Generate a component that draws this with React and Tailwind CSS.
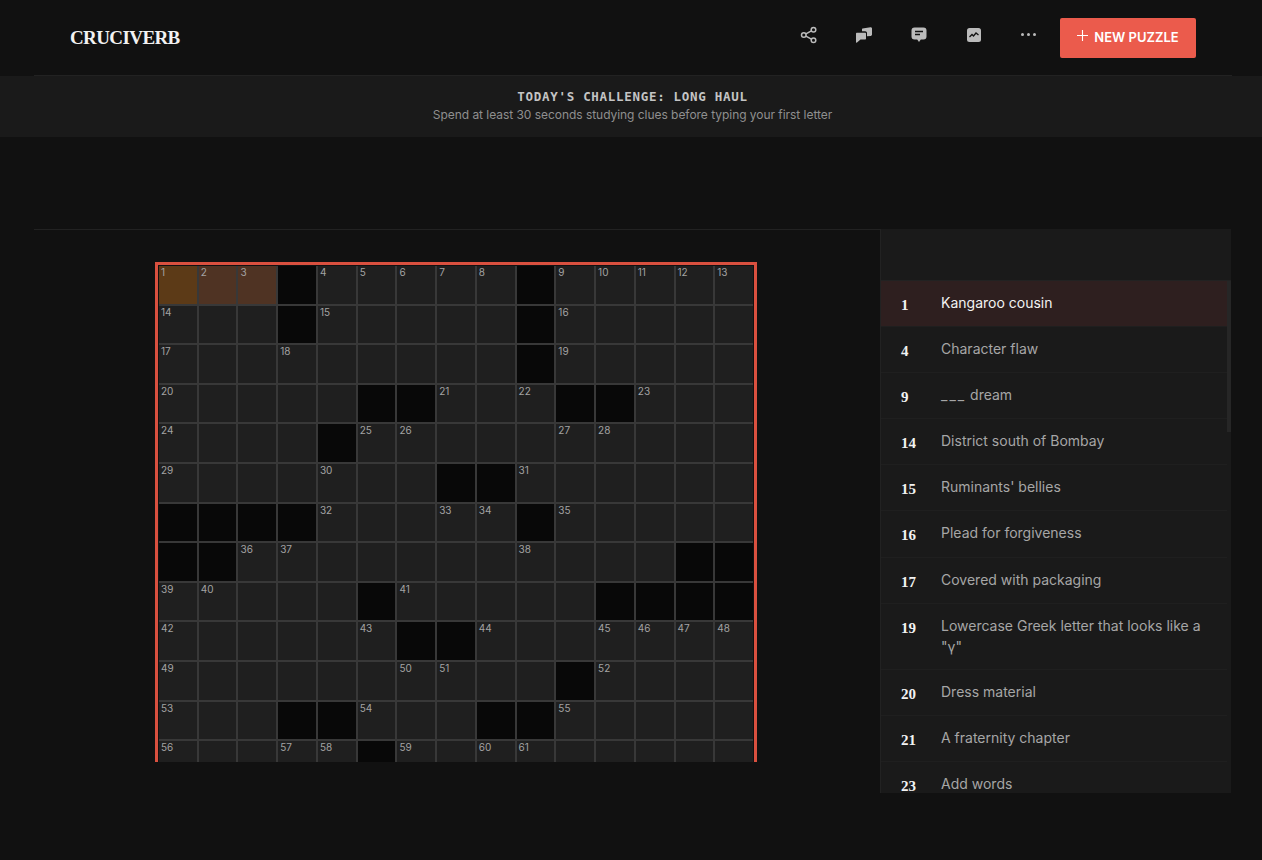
const serif = "font-['Liberation_Serif',serif]";

// 15 x 13 visible rows: "#" = black, number = clue start, 0 = empty
const rows = [
  [1, 2, 3, "#", 4, 5, 6, 7, 8, "#", 9, 10, 11, 12, 13],
  [14, 0, 0, "#", 15, 0, 0, 0, 0, "#", 16, 0, 0, 0, 0],
  [17, 0, 0, 18, 0, 0, 0, 0, 0, "#", 19, 0, 0, 0, 0],
  [20, 0, 0, 0, 0, "#", "#", 21, 0, 22, "#", "#", 23, 0, 0],
  [24, 0, 0, 0, "#", 25, 26, 0, 0, 0, 27, 28, 0, 0, 0],
  [29, 0, 0, 0, 30, 0, 0, "#", "#", 31, 0, 0, 0, 0, 0],
  ["#", "#", "#", "#", 32, 0, 0, 33, 34, "#", 35, 0, 0, 0, 0],
  ["#", "#", 36, 37, 0, 0, 0, 0, 0, 38, 0, 0, 0, "#", "#"],
  [39, 40, 0, 0, 0, "#", 41, 0, 0, 0, 0, "#", "#", "#", "#"],
  [42, 0, 0, 0, 0, 43, "#", "#", 44, 0, 0, 45, 46, 47, 48],
  [49, 0, 0, 0, 0, 0, 50, 51, 0, 0, "#", 52, 0, 0, 0],
  [53, 0, 0, "#", "#", 54, 0, 0, "#", "#", 55, 0, 0, 0, 0],
  [56, 0, 0, 57, 58, "#", 59, 0, 60, 61, 0, 0, 0, 0, 0],
];

const clues = [
  { n: 1, text: "Kangaroo cousin", active: true },
  { n: 4, text: "Character flaw" },
  { n: 9, text: <><span className="tracking-[2px]">___</span> dream</> },
  { n: 14, text: "District south of Bombay" },
  { n: 15, text: "Ruminants' bellies" },
  { n: 16, text: "Plead for forgiveness" },
  { n: 17, text: "Covered with packaging" },
  { n: 19, text: 'Lowercase Greek letter that looks like a "γ"' },
  { n: 20, text: "Dress material" },
  { n: 21, text: "A fraternity chapter" },
  { n: 23, text: "Add words" },
];

function ShareIcon() {
  return (
    <svg width="18" height="18" viewBox="0 0 18 18" fill="none" stroke="currentColor" strokeWidth="1.5">
      <circle cx="13.5" cy="3.8" r="2.3" />
      <circle cx="3.8" cy="9" r="2.3" />
      <circle cx="13.5" cy="14.2" r="2.3" />
      <path d="M5.9 7.9l5.5-3M5.9 10.1l5.5 3" />
    </svg>
  );
}

function ForumIcon() {
  return (
    <svg width="16" height="16" viewBox="0 0 16 16" fill="currentColor">
      <path d="M6.5 1.5l8-1.2c.8-.1 1.5.5 1.5 1.3v6c0 .7-.5 1.2-1.2 1.3l-3.8.4V6c0-1-.8-1.7-1.8-1.7H6V2.2c0-.3.2-.6.5-.7z" />
      <path d="M1 5.8h8c.6 0 1 .4 1 1v4.7c0 .6-.4 1-1 1H4.5L1 15.6c-.3.2-1 .2-1-.4V6.8c0-.6.4-1 1-1z" />
    </svg>
  );
}

function CommentIcon() {
  return (
    <svg width="16" height="16" viewBox="0 0 16 16" fill="currentColor">
      <path d="M3.5 0.5h9a3 3 0 0 1 3 3v6a3 3 0 0 1-3 3H9.8L8 15l-1.8-2.5H3.5a3 3 0 0 1-3-3v-6a3 3 0 0 1 3-3z" />
      <path d="M4 4.5h8M4 7.5h5" stroke="#111111" strokeWidth="1.4" />
    </svg>
  );
}

function ChartIcon() {
  return (
    <svg width="14" height="14" viewBox="0 0 14 14" fill="currentColor">
      <rect x="0" y="0" width="14" height="14" rx="2.5" />
      <path d="M2.5 9l2.5-2.5 1.5 1.5 2.5-3 2.5 2" fill="none" stroke="#111111" strokeWidth="1.3" />
    </svg>
  );
}

function Cell({ value, r, c }) {
  if (value === "#") return <div className="bg-[#080808]" />;
  let bg = "bg-[#1f1f1f]";
  if (r === 0 && c === 0) bg = "bg-[#5c3a17]";
  else if (r === 0 && c < 3) bg = "bg-[#4f3323]";
  return (
    <div className={`${bg} pl-[2px] text-[10px] leading-[13px] text-[#a3a3a3]`}>
      {value !== 0 && value}
    </div>
  );
}

export default function App() {
  return (
    <div className="min-h-screen bg-[#111111] font-['Inter',sans-serif]">
      <header className="ml-[34px] mr-[30px] flex h-[76px] items-center justify-between border-b border-[#222222] pl-9 pr-9">
        <div className={`${serif} pt-[2px] text-[19px] font-bold tracking-[-0.6px] text-[#f2f2f2]`}>CRUCIVERB</div>
        <div className="flex items-center text-[#bbbbbb]">
          <div className="flex w-[55px] justify-center pb-[6px]"><ShareIcon /></div>
          <div className="flex w-[55px] justify-center pb-[6px]"><ForumIcon /></div>
          <div className="flex w-[55px] justify-center pb-[6px]"><CommentIcon /></div>
          <div className="flex w-[55px] justify-center pb-[6px]"><ChartIcon /></div>
          <div className="flex w-[55px] justify-center gap-[3px] pb-[6px]">
            <span className="size-[3px] rounded-full bg-[#bbbbbb]" />
            <span className="size-[3px] rounded-full bg-[#bbbbbb]" />
            <span className="size-[3px] rounded-full bg-[#bbbbbb]" />
          </div>
          <button className="ml-[4px] flex h-10 w-[136px] items-center justify-center gap-[6px] rounded-[2px] bg-[#eb5b4c] text-[13px] font-semibold text-white">
            <svg width="11" height="11" viewBox="0 0 11 11" stroke="currentColor" strokeWidth="1.1" className="-mt-[5px]">
              <path d="M5.5 0v11M0 5.5h11" />
            </svg>
            NEW PUZZLE
          </button>
        </div>
      </header>

      <div className="flex h-[61px] flex-col items-center bg-[#1a1a1a] pl-[3px] pt-[12px]">
        <div className="font-['DejaVu_Sans_Mono',monospace] text-[12.5px] font-bold leading-[17px] tracking-[0.7px] text-[#c4c4c4]">
          TODAY'S CHALLENGE: LONG HAUL
        </div>
        <div className="mt-[2px] text-[12px] leading-[16px] tracking-[-0.04px] text-[#8f8f8f]">
          Spend at least 30 seconds studying clues before typing your first letter
        </div>
      </div>

      <main className="ml-[34px] mr-[31px] mt-[92px] flex h-[564px]">
        <section className="flex-1 border-t border-[#222222] pl-[121px] pt-[32px]">
          <div className="h-[500px] w-[602px] overflow-hidden border-x-[3px] border-t-[3px] border-[#d9503f] p-px">
            <div className="grid grid-cols-[repeat(15,1fr)] auto-rows-[37.6px] gap-[2px] bg-[#383838]">
              {rows.map((row, r) =>
                row.map((value, c) => <Cell key={`${r}-${c}`} value={value} r={r} c={c} />)
              )}
            </div>
          </div>
        </section>

        <aside className="relative flex w-[351px] flex-col overflow-hidden border-l border-[#222222] bg-[#1a1a1a]">
          <div className="h-[51.5px] shrink-0 border-b border-[#222222]" />
          <div className="pr-[4px]">
            {clues.map((clue) => (
              <div
                key={clue.n}
                className={`flex border-b border-[#1f1f1f] py-[11px] pl-5 pr-6 ${clue.active ? "bg-[#2e1f1f]" : ""}`}
              >
                <span className={`${serif} h-[23.2px] w-10 shrink-0 pt-[3px] text-[15px] font-bold leading-[20px] text-[#f2f2f2]`}>{clue.n}</span>
                <span className={`text-[14px] leading-[21.5px] ${clue.active ? "text-[#f2f2f2]" : "text-[#a6a6a6]"}`}>{clue.text}</span>
              </div>
            ))}
          </div>
          <div className="absolute right-0 top-[52px] h-[151px] w-[4px] bg-[#262626]" />
        </aside>
      </main>
    </div>
  );
}
